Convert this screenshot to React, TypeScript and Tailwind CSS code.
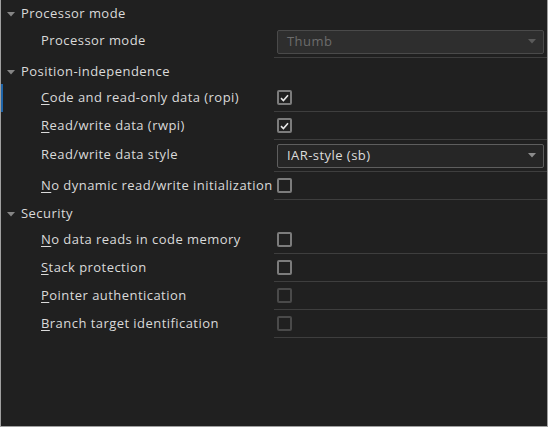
import React from "react"

type Row =
  | { kind: "check"; label: string; key?: number; checked?: boolean; disabled?: boolean; active?: boolean }
  | { kind: "select"; label: string; value: string; disabled?: boolean }

const groups: { title: string; rows: Row[] }[] = [
  {
    title: "Processor mode",
    rows: [{ kind: "select", label: "Processor mode", value: "Thumb", disabled: true }],
  },
  {
    title: "Position-independence",
    rows: [
      { kind: "check", label: "Code and read-only data (ropi)", key: 0, checked: true, active: true },
      { kind: "check", label: "Read/write data (rwpi)", key: 0, checked: true },
      { kind: "select", label: "Read/write data style", value: "IAR-style (sb)" },
      { kind: "check", label: "No dynamic read/write initialization", key: 0 },
    ],
  },
  {
    title: "Security",
    rows: [
      { kind: "check", label: "No data reads in code memory", key: 0 },
      { kind: "check", label: "Stack protection", key: 0 },
      { kind: "check", label: "Pointer authentication", key: 0, disabled: true },
      { kind: "check", label: "Branch target identification", key: 0, disabled: true },
    ],
  },
]

function Caret({ className }: { className: string }) {
  return (
    <svg width="8" height="5" viewBox="0 0 8 5" className={className}>
      <path d="M0 0 H8 L4 4.5 Z" fill="currentColor" />
    </svg>
  )
}

function Label({ text, k }: { text: string; k?: number }) {
  if (k === undefined) return <span>{text}</span>
  return (
    <span>
      {text.slice(0, k)}
      <span className="underline underline-offset-2">{text[k]}</span>
      {text.slice(k + 1)}
    </span>
  )
}

function Checkbox({ checked, disabled }: { checked?: boolean; disabled?: boolean }) {
  return (
    <div
      className={`w-[15px] h-[15px] border-2 rounded-[2px] flex items-center justify-center ${
        disabled ? "border-[#4a4a4a]" : "border-[#7c7c7c]"
      }`}
    >
      {checked && (
        <svg width="9" height="8" viewBox="0 0 9 8">
          <path d="M1 4.2 L3.4 6.5 L8 1.2" fill="none" stroke="#e6e6e6" strokeWidth="1.6" />
        </svg>
      )}
    </div>
  )
}

function Select({ value, disabled }: { value: string; disabled?: boolean }) {
  return (
    <div
      className={`w-[267px] h-[24px] border rounded-[2px] flex items-center justify-between pl-[9px] pr-[7px] ${
        disabled
          ? "bg-[#2e2e2e] border-[#4a4a4a] text-[#6c6c6c]"
          : "bg-[#262626] border-[#5e5e5e] text-[#dcdcdc]"
      }`}
    >
      <span>{value}</span>
      <Caret className={disabled ? "text-[#5a5a5a]" : "text-[#8c8c8c]"} />
    </div>
  )
}

export default function App() {
  return (
    <div
      className="w-[548px] h-[427px] bg-[#202020] border-l border-r border-b border-[#a0a0a0] text-[#dadada] text-[13px] tracking-[0.45px] overflow-hidden"
      style={{ fontFamily: '"Open Sans", "Noto Sans", sans-serif' }}
    >
      {groups.map((g) => (
        <div key={g.title}>
          <div className="h-[26px] flex items-center pt-[2px]">
            <Caret className="ml-[6px] mr-[6px] text-[#858585]" />
            <span>{g.title}</span>
          </div>
          {g.rows.map((r) => (
            <div
              key={r.label}
              className={`flex ${r.kind === "select" ? "h-[32px]" : "h-[28px]"} ${
                r.kind === "check" && r.active ? "border-l-2 border-[#1e64a8]" : "border-l-2 border-transparent"
              }`}
            >
              <div className={`w-[271px] pl-[38px] flex ${r.kind === "select" ? "items-start pt-[5px]" : "items-center"} whitespace-nowrap`}>
                <Label text={r.label} k={r.kind === "check" ? r.key : undefined} />
              </div>
              <div className="flex-1 border-b border-[#3e3e3e] flex items-center pl-[3px]">
                {r.kind === "check" ? (
                  <Checkbox checked={r.checked} disabled={r.disabled} />
                ) : (
                  <Select value={r.value} disabled={r.disabled} />
                )}
              </div>
            </div>
          ))}
        </div>
      ))}
    </div>
  )
}
